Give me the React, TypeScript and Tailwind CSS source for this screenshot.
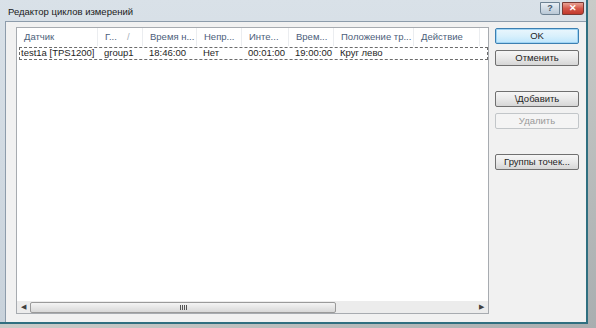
import { ReactNode } from "react";

const cols = [
  { title: "Датчик", w: "w-[81px]" },
  { title: "Г...", w: "w-[45px]", sort: true },
  { title: "Время н...", w: "w-[54px]" },
  { title: "Непр...", w: "w-[45px]" },
  { title: "Инте...", w: "w-[47px]" },
  { title: "Врем...", w: "w-[45px]" },
  { title: "Положение тр...", w: "w-[80px]" },
  { title: "Действие", w: "w-[66px]" },
];

const row = ["test1a [TPS1200]", "group1", "18:46:00", "Нет", "00:01:00", "19:00:00", "Круг лево", ""];

const Btn = ({ children, def, disabled }: { children: ReactNode; def?: boolean; disabled?: boolean }) => {
  if (disabled)
    return (
      <div className="flex h-[16px] w-[84px] items-center justify-center rounded-[2px] border border-[#c2c6c9] bg-[#f4f4f4] text-[#9a9a9a]">
        {children}
      </div>
    );
  return (
    <div
      className={
        "flex h-[16px] w-[84px] items-center justify-center rounded-[2px] border text-[#1e1e1e] " +
        (def
          ? "border-[#3c7fb1] bg-gradient-to-b from-[#eaf6fd] via-[#d9f0fc] to-[#bee6fd] shadow-[inset_0_0_0_1px_#9fd4f4]"
          : "border-[#707070] bg-gradient-to-b from-[#f6f6f6] via-[#e9e9e9] to-[#d6d6d6]")
      }
    >
      {children}
    </div>
  );
};

export default function App() {
  return (
    <div
      className="h-[328px] w-[596px] overflow-hidden bg-gradient-to-br from-[#9ea4a6] via-[#c9cbc8] to-[#a9aeb0]"
      style={{ fontFamily: '"Liberation Sans", Arial, sans-serif' }}
    >
      <div className="flex h-[324px] w-[588px] flex-col border-r-2 border-b-2 border-[#2f6f80] bg-gradient-to-b from-[#d9e1e8] to-[#c8d2db] text-[9.5px]">
        {/* title bar */}
        <div className="flex h-[21px] items-start pl-[8px] pr-[2px]">
          <span className="mt-[5px] text-[9.5px] text-[#1a1a1a]">Редактор циклов измерений</span>
          <div className="ml-auto mt-[2px] flex gap-[2px]">
            <div className="flex h-[13px] w-[20px] items-center justify-center rounded-bl-[3px] border border-[#6e8293] bg-gradient-to-b from-[#e8eef4] to-[#b9c8d6] text-[9px] font-bold leading-none text-[#44566a]">
              ?
            </div>
            <div className="flex h-[13px] w-[22px] items-center justify-center rounded-br-[3px] border border-[#7a3a34] bg-gradient-to-b from-[#e8a093] via-[#d4574a] to-[#c2392c] text-[9px] font-bold leading-none text-white">
              ✕
            </div>
          </div>
        </div>
        {/* client area */}
        <div className="ml-[5px] flex flex-1 border-l border-t border-[#8d9cab] bg-[#f1f1f1] pl-[10px] pt-[5px]">
          {/* list view */}
          <div className="flex h-[287px] w-[473px] flex-col border border-[#a7abb0] bg-white">
            <div className="flex h-[18px] items-center">
              {cols.map((c, i) => (
                <div
                  key={i}
                  className={c.w + " relative flex h-full items-center overflow-hidden border-r border-[#ebedf0] pl-[7px] text-[#4c607a]"}
                >
                  <span className="whitespace-nowrap">{c.title}</span>
                  {c.sort && <span className="absolute left-[29px] text-[#a8b0bb]">/</span>}
                </div>
              ))}
            </div>
            <div className="ml-[2px] mt-[1px] flex h-[13px] items-center border border-dashed border-[#6b6b6b] text-[#1e1e1e]">
              {row.map((t, i) => (
                <div key={i} className={cols[i].w + " whitespace-nowrap" + (i === 0 ? " pl-[1px]" : " pl-[3px]")}>
                  {t}
                </div>
              ))}
            </div>
            <div className="flex-1" />
            {/* horizontal scrollbar */}
            <div className="flex h-[12px] items-center bg-[#ececec]">
              <div className="flex w-[13px] items-center justify-center text-[7px] text-[#404040]">◀</div>
              <div className="flex h-[11px] w-[306px] items-center justify-center rounded-[2px] border border-[#9a9a9a] bg-gradient-to-b from-[#f4f4f4] to-[#d8d8d8]">
                <div className="flex gap-[1px]">
                  <div className="h-[5px] w-[1px] bg-[#555]" />
                  <div className="h-[5px] w-[1px] bg-[#555]" />
                  <div className="h-[5px] w-[1px] bg-[#555]" />
                  <div className="h-[5px] w-[1px] bg-[#555]" />
                </div>
              </div>
              <div className="flex-1" />
              <div className="flex w-[13px] items-center justify-center text-[7px] text-[#404040]">▶</div>
            </div>
          </div>
          {/* buttons */}
          <div className="ml-[6px] flex flex-col pt-[1px]">
            <Btn def>OK</Btn>
            <div className="mt-[6px]">
              <Btn>Отменить</Btn>
            </div>
            <div className="mt-[25px]">
              <Btn>\Добавить</Btn>
            </div>
            <div className="mt-[6px]">
              <Btn disabled>Удалить</Btn>
            </div>
            <div className="mt-[25px]">
              <Btn>Группы точек...</Btn>
            </div>
          </div>
        </div>
      </div>
    </div>
  );
}
